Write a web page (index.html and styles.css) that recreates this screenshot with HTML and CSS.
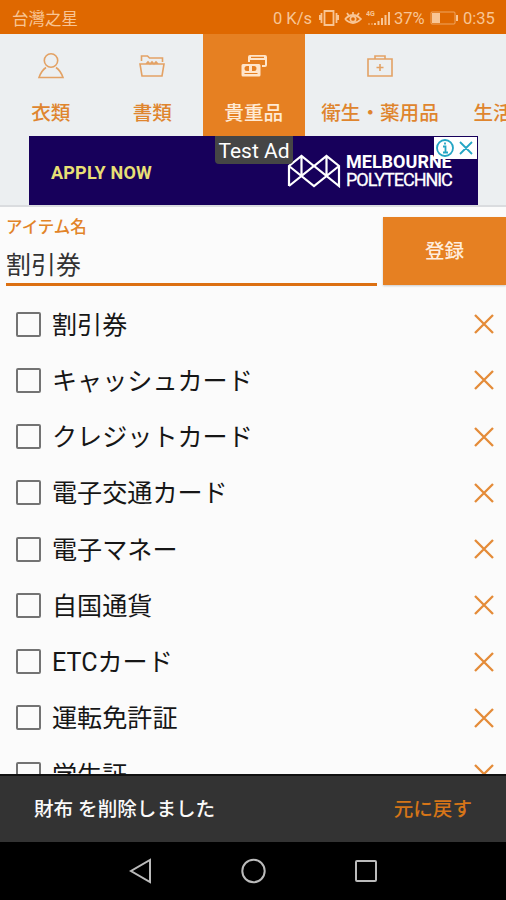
FILE: index.html
```html
<!DOCTYPE html>
<html lang="ja">
<head>
<meta charset="utf-8">
<title>アイテム</title>
<link rel="stylesheet" href="styles.css">
</head>
<body>
<div class="screen">
  <header class="status">
    <span class="carrier">台灣之星</span>
    <div class="indicators">
      <span class="speed">0 K/s</span>
      <svg class="vibrate" width="20" height="18" viewBox="0 0 20 18"><path d="M5.5 2h9v14h-9zM2.5 4v10M17.5 4v10M.7 6v5M19.3 6v5"/></svg>
      <svg class="eye" width="18" height="18" viewBox="0 0 18 18"><path d="M1 10q8-8 16 0-8 8-16 0M9 3v3M3 4l2 3M15 4l-2 3"/><circle cx="9" cy="10" r="2.7"/></svg>
      <svg class="signal" width="25" height="18" viewBox="0 0 25 18"><text x="0" y="7">4G</text><path d="M9 16v-2M12.5 16v-4M16 16V9M19.5 16V6M23 16V3"/><path class="dim" d="M2 15h5"/></svg>
      <span class="percent">37%</span>
      <svg class="battery" width="29" height="18" viewBox="0 0 29 18"><rect class="shell" x="1" y="3" width="24" height="12" rx="1"/><path class="fill" d="M2 4h8v10H2zM26 6h2v6h-2z"/></svg>
      <span class="clock">0:35</span>
    </div>
  </header>
  <nav class="tabs">
    <a class="tab"><svg width="28" height="28" viewBox="0 0 28 28"><circle cx="14" cy="8.5" r="6.7"/><path d="M9 15.500Q4.500 18.500 2 25.500h24Q23.500 18.500 19 15.500"/></svg><span>衣類</span></a>
    <a class="tab"><svg width="28" height="28" viewBox="0 0 28 28"><path d="M3.500 9V4h6l2 2h13v4M2 12h24l-2 12H4zM8 12l2-2 2 2 2-2 2 2 2-2 2 2"/></svg><span>書類</span></a>
    <a class="tab active"><svg width="28" height="28" viewBox="0 0 28 28"><path class="solid" fill-rule="evenodd" d="M10 3h15q2 0 2 2v8q0 2-2 2h-3v-2h3V8H10v2H8V5q0-2 2-2zM11 4.800v1.200h13V4.800z"/><path class="solid" fill-rule="evenodd" d="M3 12h16q1.500 0 1.500 1.500v9.500q0 1.500-1.500 1.500H3q-1.500 0-1.500-1.500v-9.500Q1.500 12 3 12zM7 14a2.500 2.500 0 0 0 0 5h2v-5zM12 14v5h2a2.500 2.500 0 0 0 0-5zM4.500 21v1h13v-1z"/></svg><span>貴重品</span></a>
    <a class="tab wide"><svg width="28" height="28" viewBox="0 0 28 28"><path d="M2 7h24v17H2zM9 7V4h10v3M14 12v7M10.500 15.500h7"/></svg><span>衛生・薬用品</span></a>
    <a class="tab last"><span>生活</span></a>
  </nav>
  <section class="ad-strip">
    <div class="ad">
      <span class="apply">APPLY NOW</span>
      <svg class="emblem" width="54" height="34" viewBox="0 0 54 34"><path d="M2 32V12L14.500 2 27 12 39.500 2 52 12v20L27 12 2 32M2 12l25 20 25-20M14.500 2v20M39.500 2v20"/></svg>
      <div class="brand"><b>MELBOURNE</b><span>POLYTECHNIC</span></div>
      <span class="test">Test Ad</span>
      <svg class="choices" width="43" height="22" viewBox="0 0 43 22"><circle cx="11" cy="11" r="8"/><path d="M9 9.500h2.500v6M9 15.500h5M11 5.500v2M26 5l12 12M38 5 26 17"/></svg>
    </div>
  </section>
  <section class="entry">
    <div class="field"><label>アイテム名</label><span class="value">割引券</span></div>
    <div class="submit">登録</div>
  </section>
  <main class="list">
    <div class="row"><i></i><span>割引券</span><svg width="20" height="20" viewBox="0 0 20 20"><path d="M1 1l18 18M19 1 1 19"/></svg></div>
    <div class="row"><i></i><span>キャッシュカード</span><svg width="20" height="20" viewBox="0 0 20 20"><path d="M1 1l18 18M19 1 1 19"/></svg></div>
    <div class="row"><i></i><span>クレジットカード</span><svg width="20" height="20" viewBox="0 0 20 20"><path d="M1 1l18 18M19 1 1 19"/></svg></div>
    <div class="row"><i></i><span>電子交通カード</span><svg width="20" height="20" viewBox="0 0 20 20"><path d="M1 1l18 18M19 1 1 19"/></svg></div>
    <div class="row"><i></i><span>電子マネー</span><svg width="20" height="20" viewBox="0 0 20 20"><path d="M1 1l18 18M19 1 1 19"/></svg></div>
    <div class="row"><i></i><span>自国通貨</span><svg width="20" height="20" viewBox="0 0 20 20"><path d="M1 1l18 18M19 1 1 19"/></svg></div>
    <div class="row"><i></i><span>ETCカード</span><svg width="20" height="20" viewBox="0 0 20 20"><path d="M1 1l18 18M19 1 1 19"/></svg></div>
    <div class="row"><i></i><span>運転免許証</span><svg width="20" height="20" viewBox="0 0 20 20"><path d="M1 1l18 18M19 1 1 19"/></svg></div>
    <div class="row"><i></i><span>学生証</span><svg width="20" height="20" viewBox="0 0 20 20"><path d="M1 1l18 18M19 1 1 19"/></svg></div>
  </main>
  <footer class="snackbar"><span>財布 を削除しました</span><span class="undo">元に戻す</span></footer>
  <nav class="system">
    <svg width="26" height="28" viewBox="0 0 26 28"><path d="M23 3v22L4 14z"/></svg>
    <svg width="28" height="28" viewBox="0 0 28 28"><circle cx="14.500" cy="14" r="11.200"/></svg>
    <svg width="26" height="28" viewBox="0 0 26 28"><rect x="3" y="4" width="20" height="20" rx="1"/></svg>
  </nav>
</div>
</body>
</html>
```

FILE: styles.css
```css
* { box-sizing: border-box; }
body { margin: 0; font-family: Roboto, "Noto Sans CJK JP", sans-serif; }
svg { display: block; flex: none; fill: none; stroke: currentColor; }
.screen { width: 506px; height: 900px; display: flex; flex-direction: column; overflow: hidden; background: #fbfbfb; }
.status { height: 34px; flex: none; display: flex; align-items: center; justify-content: space-between; padding: 2px 10px 0 12px; background: #df6800; color: #f8c595; font-size: 16.5px; white-space: nowrap; }
.carrier { font-family: "Noto Sans CJK TC", sans-serif; line-height: 20px; }
.indicators { display: flex; align-items: center; }
.speed { width: 46px; }
.vibrate { stroke-width: 1.8; }
.eye { margin-left: 5px; stroke-width: 1.7; }
.signal { margin-left: 4px; stroke-width: 2; }
.signal text { font: bold 7px Roboto, sans-serif; fill: currentColor; stroke: none; }
.dim { opacity: .4; stroke-dasharray: 2 1; }
.percent { margin-left: 3px; width: 36px; }
.battery .shell { opacity: .65; }
.battery .fill { fill: currentColor; stroke: none; }
.clock { margin-left: 4px; width: 33px; }
.tabs { height: 102px; flex: none; display: flex; background: #eceff1; color: #e2954d; }
.tab { width: 101.5px; flex: none; display: flex; flex-direction: column; align-items: center; padding-top: 18px; white-space: nowrap; font-size: 19.6px; line-height: 28px; }
.tab svg { stroke-width: 1.6; opacity: .85; }
.tab span { margin-top: 20px; color: #df852e; font-weight: 500; }
.tab.active { background: #e68022; color: #ffe5ca; }
.tab.active svg { opacity: 1; }
.tab.active span { color: #ffead4; }
.solid { fill: currentColor; stroke: none; }
.tab.wide { width: 151px; }
.tab.last { align-items: flex-start; padding-left: 18px; padding-top: 46px; }
.ad-strip { height: 71px; flex: none; padding-left: 29px; background: #eceff1; border-bottom: 2px solid #dadcdf; }
.ad { position: relative; width: 449px; height: 69px; display: flex; align-items: center; padding-left: 22px; background: #17005b; color: #fff; }
.apply { width: 236px; margin-top: 3px; color: #e7df75; font: 700 18px Roboto, sans-serif; letter-spacing: .2px; }
.emblem { stroke-width: 2.2; }
.brand { display: flex; flex-direction: column; margin-left: 5px; font-size: 18px; line-height: 18px; white-space: nowrap; }
.brand b { letter-spacing: 0; }
.brand span { letter-spacing: -1.05px; -webkit-text-stroke: .3px currentColor; }
.test { position: absolute; left: 186px; top: 0; width: 78px; height: 28px; border-radius: 0 0 4px 4px; background: #454545; text-align: center; font-size: 21px; line-height: 31px; }
.choices { position: absolute; right: 1px; top: 1px; background: #fff; color: #24a5c4; stroke-width: 1.8; }
.entry { height: 79px; flex: none; display: flex; padding-top: 10px; justify-content: space-between; }
.field { width: 371px; height: 69px; margin-left: 6px; display: flex; flex-direction: column; border-bottom: 3px solid #dc7012; }
.field label { font-size: 16.5px; line-height: 21px; color: #e28428; font-weight: 500; }
.value { margin-top: 9px; font-size: 25px; line-height: 37px; color: #333; }
.submit { width: 123px; height: 68px; background: #e68022; color: #ffeddd; font-size: 19.6px; font-weight: 500; line-height: 70px; text-align: center; box-shadow: 0 1px 2px #0003; }
.list { height: 488px; flex: none; padding-top: 10px; overflow: hidden; }
.row { height: 56.25px; display: flex; align-items: center; padding: 0 12px 0 16px; color: #161616; font-size: 25.1px; line-height: 36px; }
.row span { padding-top: 3px; }
.row i { width: 25px; height: 25px; border: 2px solid #737373; border-radius: 2px; margin-right: 11px; }
.row svg { margin-left: auto; color: #e48b38; stroke-width: 2.3; }
.snackbar { height: 68px; flex: none; display: flex; align-items: center; justify-content: space-between; padding: 0 34px 4px; background: #333; border-top: 2px solid #111; color: #fafafa; font-size: 19.6px; font-weight: 500; }
.undo { color: #d57518; }
.system { height: 58px; flex: none; display: flex; justify-content: center; align-items: center; gap: 86px; background: #000; color: #bbb; stroke-width: 2; }
```
